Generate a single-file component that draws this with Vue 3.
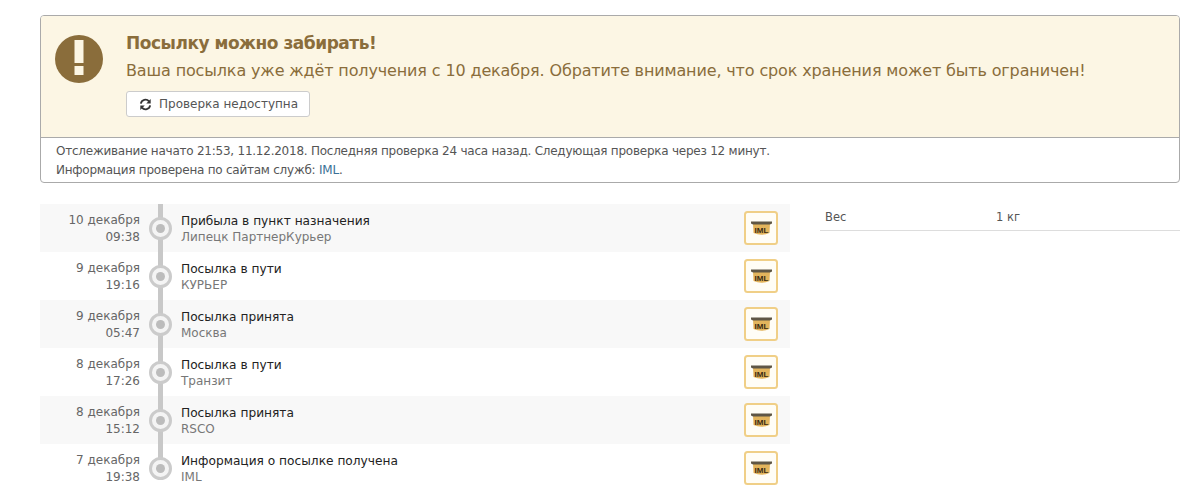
<script setup>
const events = [
  { date: '10 декабря', time: '09:38', title: 'Прибыла в пункт назначения', place: 'Липецк ПартнерКурьер' },
  { date: '9 декабря', time: '19:16', title: 'Посылка в пути', place: 'КУРЬЕР' },
  { date: '9 декабря', time: '05:47', title: 'Посылка принята', place: 'Москва' },
  { date: '8 декабря', time: '17:26', title: 'Посылка в пути', place: 'Транзит' },
  { date: '8 декабря', time: '15:12', title: 'Посылка принята', place: 'RSCO' },
  { date: '7 декабря', time: '19:38', title: 'Информация о посылке получена', place: 'IML' }
];
</script>

<template>
  <div class="page">
    <div class="card">
      <div class="alert">
        <svg class="alert-icon" viewBox="0 0 48 48">
          <circle cx="24" cy="24" r="24" fill="#8a6d3b" />
          <rect x="19.5" y="5" width="9" height="23" fill="#fcf6e4" />
          <rect x="19.5" y="31" width="9" height="9" fill="#fcf6e4" />
        </svg>
        <div class="alert-body">
          <div class="alert-title">Посылку можно забирать!</div>
          <div class="alert-text">Ваша посылка уже ждёт получения с 10 декабря. Обратите внимание, что срок хранения может быть ограничен!</div>
          <button class="btn">
            <svg class="btn-icon" viewBox="0 0 14 14">
              <path d="M2 6 A5 5 0 0 1 10.8 3.6" fill="none" stroke="#333" stroke-width="2" />
              <path d="M12.6 1 V6 H7.8 Z" fill="#333" />
              <path d="M12 8 A5 5 0 0 1 3.2 10.4" fill="none" stroke="#333" stroke-width="2" />
              <path d="M1.4 13 V8 H6.2 Z" fill="#333" />
            </svg>
            Проверка недоступна
          </button>
        </div>
      </div>
      <div class="info">
        <div>Отслеживание начато 21:53, 11.12.2018. Последняя проверка 24 часа назад. Следующая проверка через 12 минут.</div>
        <div>Информация проверена по сайтам служб: <a class="link">IML</a>.</div>
      </div>
    </div>

    <div class="columns">
      <div class="timeline">
        <div class="row" v-for="(e, i) in events" :key="i">
          <div class="when">
            <div>{{ e.date }}</div>
            <div>{{ e.time }}</div>
          </div>
          <div class="track" :class="{ last: i === events.length - 1 }">
            <span class="dot"></span>
          </div>
          <div class="what">
            <div class="title">{{ e.title }}</div>
            <div class="place">{{ e.place }}</div>
          </div>
          <div class="logo">
            <svg viewBox="0 0 34 34" width="34" height="34">
              <rect x="1" y="1" width="32" height="32" rx="2.5" fill="#fffdf6" stroke="#f0cf87" stroke-width="2" />
              <path d="M9 12 H26 L25.5 22 Q17.5 25.5 9.5 22 Z" fill="#e3b45c" />
              <path d="M7 10.5 H28 V12.5 L26 13.5 H9 L7 12.5 Z" fill="#5f5645" />
              <text x="17.5" y="21.5" class="logo-text">IML</text>
            </svg>
          </div>
        </div>
      </div>
      <div class="props">
        <div class="prop">
          <span class="prop-name">Вес</span>
          <span>1 кг</span>
        </div>
      </div>
    </div>
  </div>
</template>

<style scoped>
.page {
  width: 1204px;
  height: 500px;
  overflow: hidden;
  padding: 15px 24px 0 40px;
  box-sizing: border-box;
  font-family: "DejaVu Sans", sans-serif;
  font-size: 12px;
  color: #555;
}

.card {
  border: 1px solid #aaa;
  border-radius: 4px;
  height: 168px;
  box-sizing: border-box;
}

.alert {
  display: flex;
  height: 122px;
  background: #fcf6e4;
  border-bottom: 1px solid #aaa;
  border-radius: 3px 3px 0 0;
  box-sizing: border-box;
  padding: 15px 0 0 14px;
}

.alert-icon {
  width: 48px;
  height: 48px;
  margin-top: 4px;
  flex: none;
}

.alert-body {
  margin-left: 23px;
}

.alert-title {
  font-size: 17px;
  font-weight: bold;
  letter-spacing: -0.48px;
  color: #8a6d3b;
  line-height: 24px;
}

.alert-text {
  font-size: 16px;
  letter-spacing: -0.135px;
  color: #8a6d3b;
  line-height: 24px;
  margin-top: 4px;
}

.btn {
  display: flex;
  align-items: center;
  gap: 7px;
  margin-top: 8px;
  height: 26px;
  padding: 0 11px 0 12px;
  background: #fff;
  border: 1px solid #ccc;
  border-radius: 3px;
  font-family: inherit;
  font-size: 12px;
  color: #555;
}

.btn-icon {
  width: 13px;
  height: 13px;
}

.info {
  padding: 4px 15px 0;
  line-height: 19px;
  letter-spacing: -0.24px;
  color: #555;
}

.link {
  color: #3a7096;
}

.columns {
  display: flex;
  margin-top: 21px;
}

.timeline {
  width: 750px;
  flex: none;
}

.row {
  display: flex;
  height: 48px;
  align-items: stretch;
}

.row:nth-child(odd) {
  background: #f8f8f8;
}

.when {
  width: 100px;
  text-align: right;
  line-height: 17px;
  padding-top: 8px;
  box-sizing: border-box;
  color: #666;
}

.track {
  position: relative;
  width: 41px;
  flex: none;
  display: flex;
  align-items: center;
}

.track::before {
  content: "";
  position: absolute;
  top: 0;
  bottom: 0;
  left: 18px;
  width: 5px;
  background: #c8c8c8;
}

.track.last::before {
  bottom: 24px;
}

.dot {
  position: relative;
  width: 23px;
  height: 23px;
  margin-left: 9px;
  box-sizing: border-box;
  border: 3px solid #cbcbcb;
  border-radius: 50%;
  background: #f4f4f4;
}

.dot::after {
  content: "";
  position: absolute;
  left: 4px;
  top: 4px;
  width: 9px;
  height: 9px;
  border-radius: 50%;
  background: #bcbcbc;
}

.what {
  flex: 1;
  padding-top: 9px;
}

.title {
  font-size: 12.2px;
  line-height: 16px;
  color: #222;
}

.place {
  line-height: 17px;
  color: #777;
}

.logo {
  width: 46px;
  flex: none;
  display: flex;
  align-items: center;
  padding-bottom: 1px;
  box-sizing: border-box;
}

.logo-text {
  font-family: "Liberation Sans", sans-serif;
  font-size: 8px;
  font-weight: bold;
  fill: #3a2a12;
  text-anchor: middle;
}

.props {
  width: 360px;
  margin-left: 30px;
}

.prop {
  display: flex;
  height: 27px;
  align-items: center;
  padding-left: 5px;
  box-sizing: border-box;
  border-bottom: 1px solid #ddd;
  font-size: 11.5px;
  color: #555;
}

.prop-name {
  width: 171px;
}
</style>
